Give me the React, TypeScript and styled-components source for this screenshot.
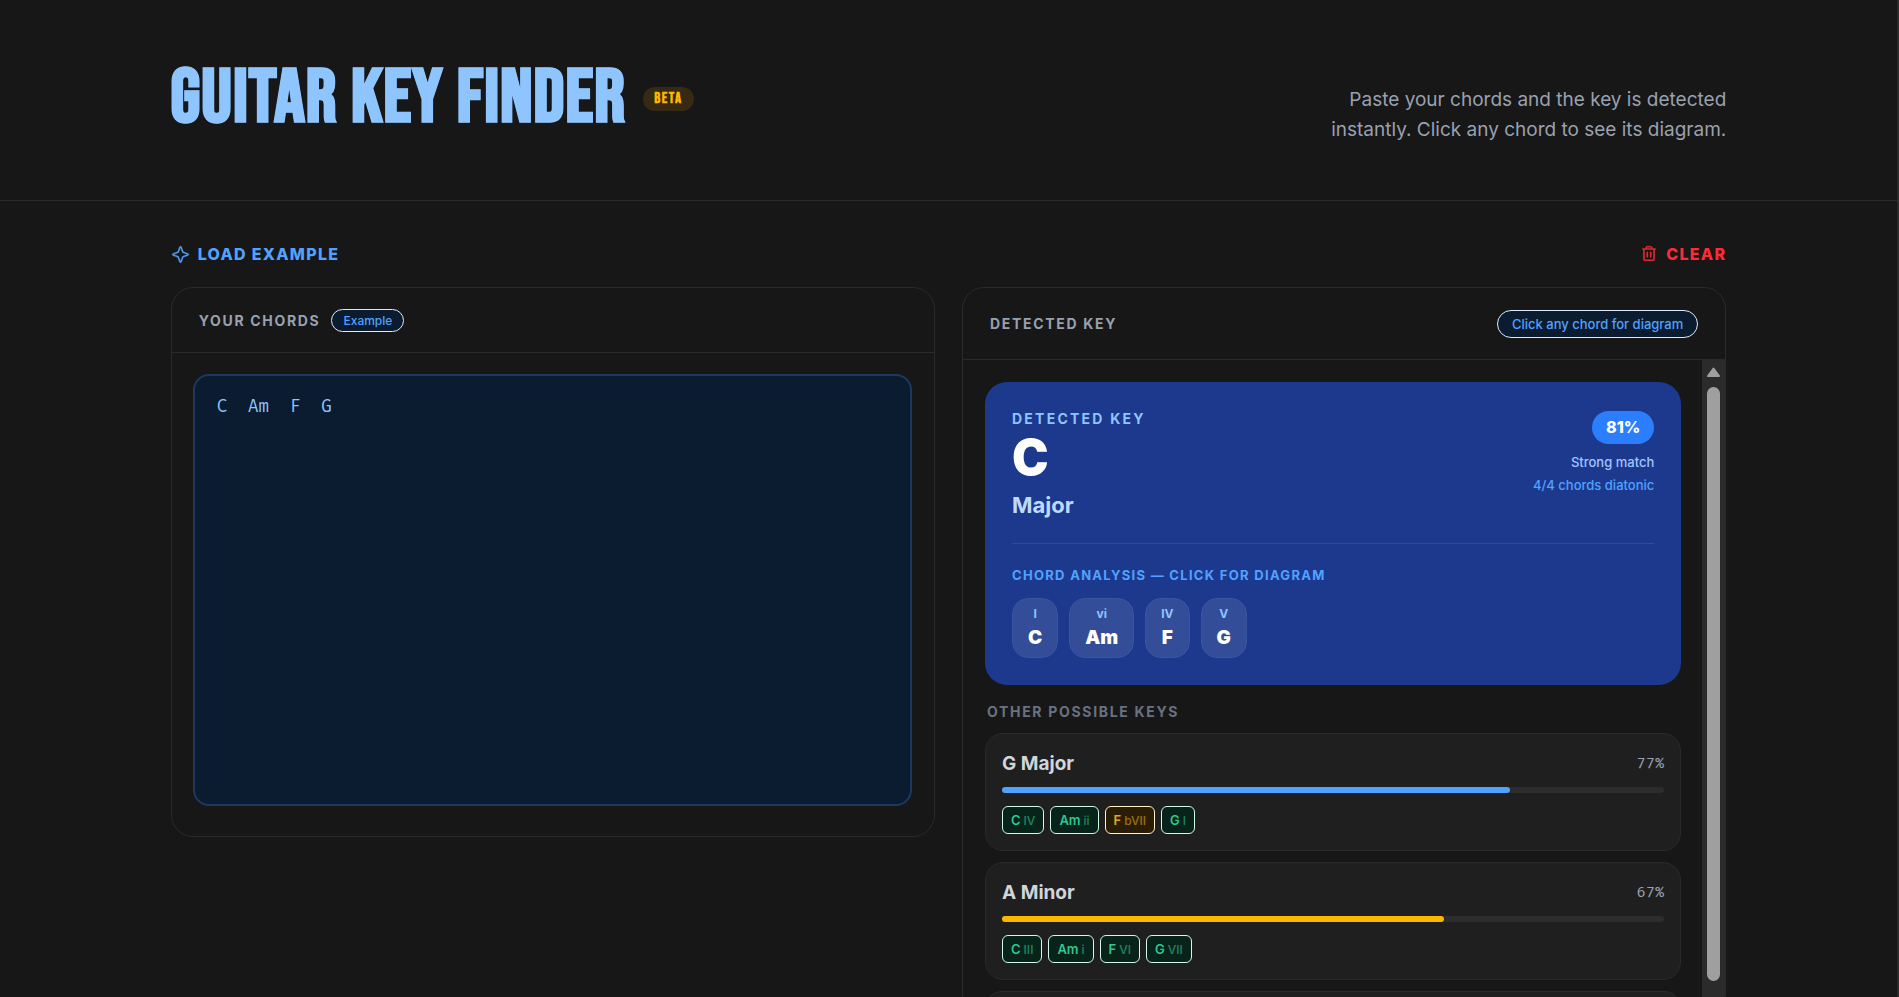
import React, { useState } from "react";
import styled, { createGlobalStyle } from "styled-components";
import { PiStarFour, PiTrash } from "react-icons/pi";

const GlobalStyle = createGlobalStyle`
  *, *::before, *::after { box-sizing: border-box; }
  html { background: #171717; }
  body { margin: 0; font-family: Inter, "Liberation Sans", sans-serif; color: #ffffff; }
  h1, h2, h3, p { margin: 0; }
  button { font: inherit; border: 0; padding: 0; background: none; cursor: pointer; }
`;

const Page = styled.div`
  min-height: 100vh;
  background: #171717;
  border-right: 2px solid #2b2b2b;
`;

const Container = styled.div`
  width: 82%;
  margin: 0 auto;
`;

const Header = styled.header`
  border-bottom: 1px solid #2a2a2a;
`;

const HeaderRow = styled(Container)`
  display: flex;
  justify-content: space-between;
  align-items: flex-start;
  padding-top: 64px;
  padding-bottom: 55px;
`;

const Brand = styled.div`
  display: flex;
  align-items: center;
  gap: 17px;
`;

const Title = styled.h1`
  font-family: "Bebas Neue", "Liberation Sans Narrow", "Roboto Condensed", Roboto, sans-serif;
  font-size: 75px;
  line-height: 70px;
  font-weight: 700;
  letter-spacing: 0.02em;
  color: #8ec5ff;
  -webkit-text-stroke: 1px #8ec5ff;
  white-space: nowrap;
`;

const Beta = styled.span`
  padding: 0 11px;
  border-radius: 12px;
  background: #382a12;
  color: #fcb700;
  font-family: "Bebas Neue", "Liberation Sans Narrow", "Roboto Condensed", Roboto, sans-serif;
  font-size: 15px;
  line-height: 24px;
  font-weight: 700;
  letter-spacing: 0.1em;
`;

const Intro = styled.p`
  max-width: 408px;
  padding-top: 21px;
  text-align: right;
  font-size: 19px;
  line-height: 30px;
  color: #99a1af;
`;

const Toolbar = styled.div`
  display: flex;
  justify-content: space-between;
  align-items: center;
  padding: 40px 0 20px;
`;

const ToolButton = styled.button<{ $color: string }>`
  display: flex;
  align-items: center;
  gap: 8px;
  color: ${(p) => p.$color};
  font-size: 16px;
  line-height: 26px;
  font-weight: 800;
  letter-spacing: 0.08em;

  svg {
    stroke: currentColor;
    stroke-width: 5px;
  }
`;

const Columns = styled.main`
  display: grid;
  grid-template-columns: 1fr 1fr;
  align-items: start;
  gap: 27px;
`;

const Panel = styled.section`
  border: 1px solid #2a2a2a;
  border-radius: 22px;
  overflow: hidden;
`;

const PanelHead = styled.div<{ $spread?: boolean }>`
  display: flex;
  align-items: center;
  justify-content: ${(p) => (p.$spread ? "space-between" : "flex-start")};
  gap: 11px;
  padding: ${(p) => (p.$spread ? "22px 27px 21px" : "21px 27px 20px")};
  border-bottom: 1px solid #2a2a2a;
`;

const Label = styled.h2<{ $accent?: boolean }>`
  font-size: 14px;
  line-height: 18px;
  font-weight: 700;
  letter-spacing: ${(p) => (p.$accent ? "0.16em" : "0.12em")};
  color: ${(p) => (p.$accent ? "#8ec5ff" : "#99a1af")};
`;

const Hint = styled.span<{ $large?: boolean }>`
  padding: 0 ${(p) => (p.$large ? 14 : 11)}px;
  border: 1px solid #dbeafe;
  border-radius: 14px;
  background: #0b1b30;
  color: #51a2ff;
  font-size: ${(p) => (p.$large ? 13 : 12)}px;
  line-height: ${(p) => (p.$large ? 26 : 21)}px;
  font-weight: 500;
`;

const Editor = styled.div`
  padding: 21px 22px 30px 21px;
`;

const ChordInput = styled.textarea`
  display: block;
  width: 100%;
  height: 432px;
  padding: 19px 22px;
  resize: none;
  outline: none;
  border: 2px solid #1c3a5f;
  border-radius: 16px;
  background: #0b1b30;
  color: #8ec5ff;
  font-family: "Fira Code", "Fira Mono", "DejaVu Sans Mono", monospace;
  font-size: 17px;
  line-height: 24px;
`;

const Scroller = styled.div`
  display: flex;
  height: 656px;
`;

const Results = styled.div`
  flex: 1;
  min-width: 0;
  overflow: hidden;
  padding: 22px 21px 0 22px;
`;

const ScrollTrack = styled.div`
  display: flex;
  flex-direction: column;
  align-items: center;
  justify-content: space-between;
  width: 23px;
  padding-top: 7px;
  background: #2b2b2b;
`;

const Thumb = styled.div`
  flex: 1;
  width: 13px;
  margin: 10px 0 25px;
  border-radius: 7px;
  background: #9f9f9f;
`;

const KeyCard = styled.article`
  padding: 28px 27px 27px;
  border-radius: 22px;
  background: #1c398e;
`;

const KeyTop = styled.div`
  display: flex;
  justify-content: space-between;
  padding-bottom: 21px;
  border-bottom: 1px solid #2f4a9b;
`;

const KeyName = styled.p`
  font-size: 49px;
  line-height: 60px;
  font-weight: 900;
`;

const KeyMode = styled.p`
  font-size: 22px;
  line-height: 34px;
  font-weight: 700;
  color: #bedbff;
`;

const Score = styled.div`
  display: flex;
  flex-direction: column;
  align-items: flex-end;
  padding-top: 1px;
  font-size: 13px;
  line-height: 23px;
  font-weight: 500;
  color: #51a2ff;
`;

const Percent = styled.span`
  margin-bottom: 7px;
  padding: 0 14px;
  border-radius: 17px;
  background: #2b7fff;
  color: #ffffff;
  font-size: 16px;
  line-height: 33px;
  font-weight: 800;
`;

const Verdict = styled.span`
  color: #a3c4ff;
`;

const AnalysisLabel = styled.h3`
  padding: 22px 0 14px;
  font-size: 13px;
  line-height: 18px;
  font-weight: 700;
  letter-spacing: 0.1em;
  color: #51a2ff;
`;

const ChordList = styled.div<{ $gap: number }>`
  display: flex;
  gap: ${(p) => p.$gap}px;
`;

const ChordButton = styled.button`
  display: flex;
  flex-direction: column;
  align-items: center;
  height: 60px;
  padding: 6px 15px;
  border: 1px solid #3a539f;
  border-radius: 16px;
  background: #334d99;
  color: #ffffff;
  font-size: 19px;
  line-height: 30px;
  font-weight: 900;
`;

const Degree = styled.span`
  font-size: 12px;
  line-height: 18px;
  font-weight: 700;
  color: #8ec5ff;
`;

const OtherLabel = styled(Label)`
  padding: 18px 2px 12px;
  color: #6a7282;
`;

const OtherCard = styled.article`
  margin-bottom: 11px;
  padding: 16px;
  border: 1px solid #2a2a2a;
  border-radius: 18px;
  background: #1f1f1f;
`;

const OtherTop = styled.div`
  display: flex;
  justify-content: space-between;
  align-items: center;
  line-height: 28px;
`;

const OtherName = styled.h3`
  font-size: 19px;
  font-weight: 700;
  color: #d1d5dc;
`;

const OtherScore = styled.span`
  font-family: "Fira Code", "Fira Mono", "DejaVu Sans Mono", monospace;
  font-size: 15px;
  color: #99a1af;
`;

const Meter = styled.div`
  height: 6px;
  margin: 9px 0 13px;
  border-radius: 3px;
  background: #2d2d2d;
`;

const MeterFill = styled.div<{ $color: string }>`
  height: 100%;
  border-radius: 3px;
  background: ${(p) => p.$color};
`;

const Tag = styled.button<{ $borrowed?: boolean }>`
  display: flex;
  align-items: center;
  gap: 3px;
  height: 28px;
  padding: 0 8px;
  border: 1px solid ${(p) => (p.$borrowed ? "#fef3c6" : "#d0fae5")};
  border-radius: 6px;
  background: ${(p) => (p.$borrowed ? "#2b1c04" : "#07231a")};
  color: ${(p) => (p.$borrowed ? "#e0ab1f" : "#2fc792")};
  font-size: 13px;
  font-weight: 600;
`;

const TagDegree = styled.span`
  font-size: 12px;
  font-weight: 500;
  opacity: 0.6;
`;

type Chord = { name: string; degree: string; borrowed?: boolean };

const analysis: Chord[] = [
  { name: "C", degree: "I" },
  { name: "Am", degree: "vi" },
  { name: "F", degree: "IV" },
  { name: "G", degree: "V" },
];

const otherKeys: { name: string; score: number; color: string; chords: Chord[] }[] = [
  {
    name: "G Major",
    score: 76.7,
    color: "#51a2ff",
    chords: [
      { name: "C", degree: "IV" },
      { name: "Am", degree: "ii" },
      { name: "F", degree: "bVII", borrowed: true },
      { name: "G", degree: "I" },
    ],
  },
  {
    name: "A Minor",
    score: 66.7,
    color: "#fcb700",
    chords: [
      { name: "C", degree: "III" },
      { name: "Am", degree: "i" },
      { name: "F", degree: "VI" },
      { name: "G", degree: "VII" },
    ],
  },
];

function Arrow({ down }: { down?: boolean }) {
  return (
    <svg width="15" height="10" viewBox="0 0 15 10" aria-hidden="true">
      <path
        d={down ? "M2 1 L13 1 L7.5 8.5 Z" : "M2 9 L13 9 L7.5 1.5 Z"}
        fill="#9f9f9f"
        stroke="#9f9f9f"
        strokeWidth="2"
        strokeLinejoin="round"
      />
    </svg>
  );
}

export default function App() {
  const [text, setText] = useState("C  Am  F  G");
  return (
    <Page>
      <GlobalStyle />
      <Header>
        <HeaderRow>
          <Brand>
            <Title>GUITAR KEY FINDER</Title>
            <Beta>BETA</Beta>
          </Brand>
          <Intro>Paste your chords and the key is detected instantly. Click any chord to see its diagram.</Intro>
        </HeaderRow>
      </Header>
      <Container>
        <Toolbar>
          <ToolButton $color="#51a2ff" type="button" onClick={() => setText("C  Am  F  G")}>
            <PiStarFour size={19} />
            LOAD EXAMPLE
          </ToolButton>
          <ToolButton $color="#fb2c36" type="button" onClick={() => setText("")}>
            <PiTrash size={18} />
            CLEAR
          </ToolButton>
        </Toolbar>
        <Columns>
          <Panel>
            <PanelHead>
              <Label as="label" htmlFor="chords">YOUR CHORDS</Label>
              <Hint>Example</Hint>
            </PanelHead>
            <Editor>
              <ChordInput id="chords" spellCheck={false} value={text} onChange={(e) => setText(e.target.value)} />
            </Editor>
          </Panel>
          <Panel>
            <PanelHead $spread>
              <Label>DETECTED KEY</Label>
              <Hint $large>Click any chord for diagram</Hint>
            </PanelHead>
            <Scroller>
              <Results>
                <KeyCard>
                  <KeyTop>
                    <div>
                      <Label $accent>DETECTED KEY</Label>
                      <KeyName>C</KeyName>
                      <KeyMode>Major</KeyMode>
                    </div>
                    <Score>
                      <Percent>81%</Percent>
                      <Verdict>Strong match</Verdict>
                      <span>4/4 chords diatonic</span>
                    </Score>
                  </KeyTop>
                  <AnalysisLabel>CHORD ANALYSIS — CLICK FOR DIAGRAM</AnalysisLabel>
                  <ChordList $gap={11}>
                    {analysis.map((c) => (
                      <ChordButton key={c.name} type="button">
                        <Degree>{c.degree}</Degree>
                        {c.name}
                      </ChordButton>
                    ))}
                  </ChordList>
                </KeyCard>
                <OtherLabel>OTHER POSSIBLE KEYS</OtherLabel>
                {otherKeys.map((k) => (
                  <OtherCard key={k.name}>
                    <OtherTop>
                      <OtherName>{k.name}</OtherName>
                      <OtherScore>{Math.round(k.score)}%</OtherScore>
                    </OtherTop>
                    <Meter>
                      <MeterFill $color={k.color} style={{ width: `${k.score}%` }} />
                    </Meter>
                    <ChordList $gap={6}>
                      {k.chords.map((c) => (
                        <Tag key={c.name} type="button" $borrowed={c.borrowed}>
                          {c.name}
                          <TagDegree>{c.degree}</TagDegree>
                        </Tag>
                      ))}
                    </ChordList>
                  </OtherCard>
                ))}
                <OtherCard />
              </Results>
              <ScrollTrack>
                <Arrow />
                <Thumb />
                <Arrow down />
              </ScrollTrack>
            </Scroller>
          </Panel>
        </Columns>
      </Container>
    </Page>
  );
}
